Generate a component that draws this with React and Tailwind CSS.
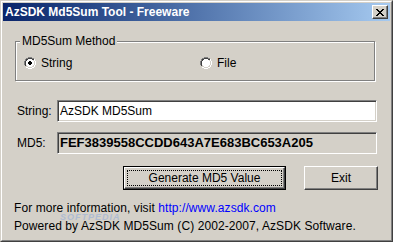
const font = { fontFamily: '"Liberation Sans", Arial, sans-serif' }

function Radio({checked}) {
    return (
        <svg width="12" height="12" viewBox="0 0 12 12" shapeRendering="crispEdges" className="shrink-0">
            {/* outer ring: gray top-left, white bottom-right */}
            <path d="M4 0h4v1H4zM2 1h2v1H2zM8 1h2v1H8zM1 2h1v2H1zM0 4h1v4H0z" fill="#808080"/>
            <path d="M10 2h1v2h-1zM11 4h1v4h-1zM10 8h1v2h-1zM8 10h2v1H8zM4 11h4v1H4zM2 10h2v1H2z" fill="#ffffff"/>
            {/* inner ring: dark top-left, light bottom-right */}
            <path d="M4 1h4v1H4zM2 2h2v1H2zM8 2h2v1H8zM1 4h1v4H1zM2 3h1v1H2zM1 8h1v1H1z" fill="#404040"/>
            <path d="M9 3h1v1H9zM10 4h1v4h-1zM9 8h1v2H9zM8 9h1v1H8zM4 10h4v1H4zM2 9h2v1H2z" fill="#d4d0c8"/>
            <path d="M4 2h4v1h1v1h1v4h-1v1h-1v1H4V9H3V8H2V4h1V3h1z" fill="#ffffff"/>
            {checked && <path d="M5 4h2v1h1v2H7v1H5V7H4V5h1z" fill="#000000"/>}
        </svg>
    )
}

function CloseGlyph() {
    const rows = [
        "XX....XX",
        ".XX..XX.",
        "..XXXX..",
        "...XX...",
        "..XXXX..",
        ".XX..XX.",
        "XX....XX",
    ]
    return (
        <svg width="8" height="7" viewBox="0 0 8 7" shapeRendering="crispEdges">
            {rows.flatMap((r, y) => r.split('').map((c, x) => c === 'X'
                ? <rect key={`${x}-${y}`} x={x} y={y} width="1" height="1" fill="#000"/>
                : null))}
        </svg>
    )
}

export default function App() {
    return (
        <div style={font}
             className="w-[393px] h-[242px] bg-[#d4d0c8] border border-t-[#d4d0c8] border-l-[#d4d0c8] border-b-[#404040] border-r-[#404040] text-[12px] text-black overflow-hidden">
            <div className="h-full flex flex-col p-px border border-t-white border-l-white border-b-[#808080] border-r-[#808080]">
                {/* title bar */}
                <div className="h-[18px] shrink-0 flex items-center justify-between pl-[2px] pr-[2px] bg-linear-to-r from-[#0a246a] to-[#a6caf0]">
                    <span className="text-white font-bold text-[12px] leading-[18px]">AzSDK Md5Sum Tool - Freeware</span>
                    <div className="w-[16px] h-[14px] flex items-center justify-center bg-[#d4d0c8] border border-t-white border-l-white border-b-[#404040] border-r-[#404040] shadow-[inset_-1px_-1px_0_#808080]">
                        <CloseGlyph/>
                    </div>
                </div>

                <div className="flex-1 flex flex-col relative">
                    {/* group box */}
                    <div className="relative ml-[12px] mt-[20px] w-[360px] h-[40px] border border-[#808080] shadow-[inset_1px_1px_0_#ffffff,1px_1px_0_#ffffff]">
                        <span className="absolute left-[4px] top-[-8px] px-[2px] bg-[#d4d0c8] leading-[14px]">MD5Sum Method</span>
                        <div className="flex items-center pl-[8px] pt-[15px]">
                            <div className="w-[176px] flex items-center gap-[5px]">
                                <Radio checked/>
                                <span className="leading-[12px]">String</span>
                            </div>
                            <div className="flex items-center gap-[5px]">
                                <Radio/>
                                <span className="leading-[12px]">File</span>
                            </div>
                        </div>
                    </div>

                    {/* string row */}
                    <div className="flex items-center mt-[19px] pl-[14px]">
                        <span className="w-[40px]">String:</span>
                        <div className="w-[320px] h-[22px] bg-white border border-t-[#808080] border-l-[#808080] border-b-white border-r-white shadow-[inset_1px_1px_0_#404040,inset_-1px_-1px_0_#d4d0c8] flex items-center pl-[2px]">
                            AzSDK MD5Sum
                        </div>
                    </div>

                    {/* md5 row */}
                    <div className="flex items-center mt-[10px] pl-[14px]">
                        <span className="w-[40px]">MD5:</span>
                        <div className="w-[320px] h-[22px] bg-[#d4d0c8] border border-t-[#808080] border-l-[#808080] border-b-white border-r-white shadow-[inset_1px_1px_0_#404040,inset_-1px_-1px_0_#d4d0c8] flex items-center pl-[2px] font-bold text-[13px]">
                            FEF3839558CCDD643A7E683BC653A205
                        </div>
                    </div>

                    {/* buttons */}
                    <div className="flex mt-[12px] pl-[120px] gap-[18px]">
                        <button className="w-[163px] h-[24px] border border-black bg-[#d4d0c8] p-0">
                            <div className="h-full border border-t-white border-l-white border-b-[#404040] border-r-[#404040] shadow-[inset_-1px_-1px_0_#808080] p-[2px]">
                                <div className="h-full border border-dotted border-black flex items-center justify-center">
                                    Generate MD5 Value
                                </div>
                            </div>
                        </button>
                        <button className="w-[74px] h-[24px] bg-[#d4d0c8] border border-t-white border-l-white border-b-[#404040] border-r-[#404040] shadow-[inset_-1px_-1px_0_#808080] flex items-center justify-center">
                            Exit
                        </button>
                    </div>

                    {/* footer */}
                    <div className="relative mt-[9px] pl-[11px] leading-[18px] tracking-[0.08px]">
                        <div>For more information, visit <span className="text-[#0000ff]">http://www.azsdk.com</span></div>
                        <div>Powered by AzSDK MD5Sum (C) 2002-2007, AzSDK Software.</div>
                        <span className="absolute left-[57px] top-[14px] text-[9px] leading-[9px] font-bold italic tracking-[1px] text-[#9fb4d8] opacity-70">SOFTPEDIA</span>
                    </div>
                </div>
            </div>
        </div>
    )
}
